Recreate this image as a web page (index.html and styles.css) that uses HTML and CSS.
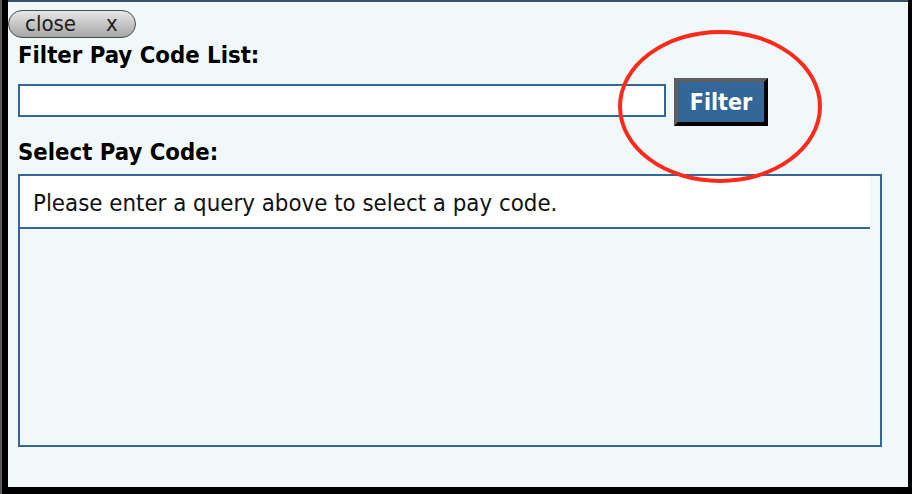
FILE: index.html
```html
<!DOCTYPE html>
<html lang="en">
<head>
    <meta charset="UTF-8">
    <title>Filter Pay Code</title>
    <link rel="stylesheet" href="styles.css">
</head>
<body>

    <div class="dialog">
        <!-- Boton de cerrar -->
        <button class="close-btn">close<span class="close-x">x</span></button>

        <div class="content">
            <label class="field-label">Filter Pay Code List:</label>
            <div class="filter-row">
                <input type="text" class="filter-input">
                <button class="filter-btn">Filter</button>
            </div>

            <label class="field-label select-label">Select Pay Code:</label>
            <div class="code-list">
                <div class="code-msg">Please enter a query above to select a pay code.</div>
            </div>
        </div>

        <!-- Marca roja -->
        <div class="annotation"></div>
    </div>

</body>
</html>
```

FILE: styles.css
```css
html, body {
    margin: 0;
    height: 100%;
}
body {
    background-color: #000;
    box-shadow: inset 2px 0 #5a5a5a;
    font-family: "DejaVu Sans Condensed", "DejaVu Sans", Tahoma, sans-serif;
    overflow: hidden;
}
.dialog {
    position: relative;
    box-sizing: border-box;
    height: 494px;
    margin-left: 8px;
    margin-right: 4px;
    border-top: 2px solid #3b5566;
    border-bottom: 7px solid #000;
    background-color: #f0f8fa;
}
.close-btn {
    display: block;
    box-sizing: border-box;
    width: 128px;
    height: 28px;
    margin-top: 8px;
    padding: 0 0 0 16px;
    text-align: left;
    font-family: inherit;
    font-size: 22px;
    line-height: 20px;
    color: #1c1c1c;
    background: linear-gradient(#e8e8e8, #c2c2c2 55%, #a6a6a6);
    border: 1px solid #4a4a4a;
    border-radius: 14px;
}
.close-x {
    margin-left: 30px;
}
.content {
    padding-left: 10px;
}
.field-label {
    display: block;
    font-weight: bold;
    font-size: 23.7px;
    line-height: 26px;
    color: #000;
    margin-top: 4px;
}
.filter-row {
    display: flex;
    align-items: flex-start;
    margin-top: 10px;
}
.filter-input {
    box-sizing: border-box;
    width: 648px;
    height: 33px;
    margin: 6px 0 0 0;
    border: 2px solid #336699;
    background: #fff;
}
.filter-btn {
    box-sizing: border-box;
    width: 94px;
    height: 48px;
    margin-left: 8px;
    padding: 0;
    font-family: inherit;
    font-weight: bold;
    font-size: 23px;
    color: #fff;
    background-color: #336699;
    border: 4px solid;
    border-color: #5e5e5e #000 #000 #5e5e5e;
}
.select-label {
    margin-top: 13px;
}
.code-list {
    box-sizing: border-box;
    width: 864px;
    height: 273px;
    margin-top: 9px;
    border: 2px solid #336699;
}
.code-msg {
    box-sizing: border-box;
    width: 850px;
    height: 53px;
    padding: 14px 0 0 13px;
    font-size: 23.8px;
    line-height: 26px;
    color: #111;
    background: #fff;
    border-bottom: 2px solid #336699;
}
.annotation {
    position: absolute;
    left: 610px;
    top: 28px;
    width: 204px;
    height: 153px;
    border: 4px solid #ff2a1a;
    border-radius: 50%;
    box-sizing: border-box;
}
```
